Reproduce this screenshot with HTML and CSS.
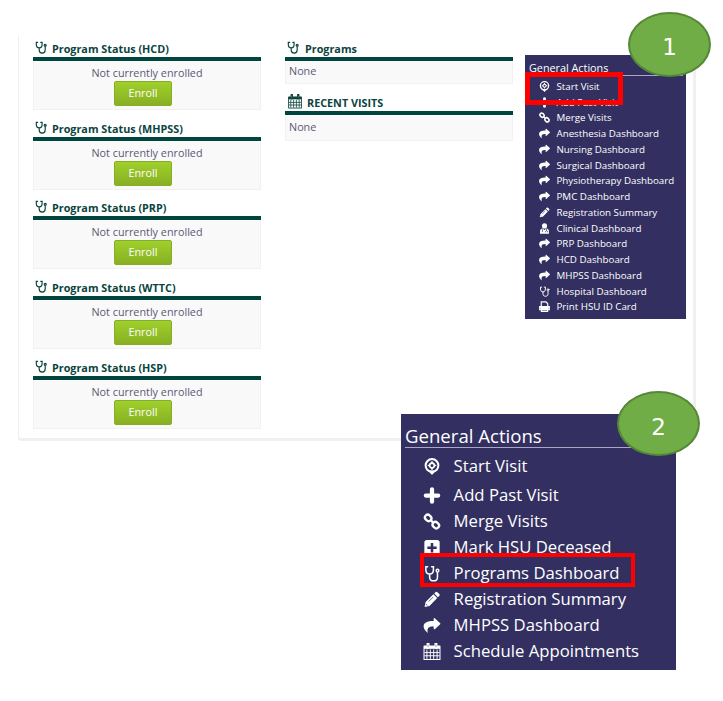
FILE: index.html
```
<!DOCTYPE html>
<html lang="en">
<head>
<meta charset="utf-8">
<title>Patient Dashboard</title>
<link rel="stylesheet" href="styles.css">
</head>
<body>
<svg class="defs" aria-hidden="true">
  <symbol id="steth" viewBox="0 0 16 18"><g fill="none" stroke="currentColor" stroke-width="1.6" stroke-linecap="round"><path d="M3.4 1.8H1.5V5C1.5 8 3 9.6 5.5 9.6S9.5 8 9.5 5V1.8H7.6M5.5 10V12.6C5.5 15.4 7.2 16.8 9.7 16.8S13.8 15.4 13.8 12.6V8"/><circle cx="13.8" cy="6" r="1.4"/></g></symbol>
  <symbol id="pin" viewBox="0 0 16 16"><path d="M4.2 11.8 8 16l3.8-4.2z" fill="currentColor"/><circle cx="8" cy="7" r="6" fill="none" stroke="currentColor" stroke-width="1.9"/><circle cx="8" cy="7" r="2.2" fill="none" stroke="currentColor" stroke-width="1.5"/><path d="M8 3v2M8 9v2M4 7h2M10 7h2" stroke="currentColor" stroke-width="1.5"/></symbol>
  <symbol id="plus" viewBox="0 0 16 16"><path d="M8 2.2v11.6M2.2 8h11.6" stroke="currentColor" stroke-width="4" stroke-linecap="round"/></symbol>
  <symbol id="link" viewBox="0 0 16 16"><g fill="none" stroke="currentColor" stroke-width="2.2"><rect x="-3.2" y="-2.6" width="6.4" height="5.2" rx="2.6" transform="translate(4.4 4.6) rotate(45)"/><rect x="-3.2" y="-2.6" width="6.4" height="5.2" rx="2.6" transform="translate(11.6 11.4) rotate(45)"/><path d="M6.2 6.2l3.6 3.6"/></g></symbol>
  <symbol id="share" viewBox="0 0 16 16"><path d="M9.6 1.2q.7-.4 1.3.1l4.8 4.5q.5.5 0 1l-4.8 4.5q-.6.6-1.3.1V8.9C5.2 8.7 3.2 9.8 3.9 14.2q.1 1-.5.3C1.2 12.4 0 10.4.1 8.4.4 5 4 3.6 9.6 3.7z" fill="currentColor"/></symbol>
  <symbol id="pencil" viewBox="0 0 16 16"><path d="M1 15l1-4.6L9.3 3.1l3.6 3.6L5.6 14zM10.1 2.3 11.5.9q.8-.6 1.6.2l1.8 1.8q.8.8.1 1.6l-1.4 1.4z" fill="currentColor"/><path d="M2.3 12.3l1.4 1.4M5 9.8l4-4" stroke="#333061" stroke-width=".7"/></symbol>
  <symbol id="calendar" viewBox="0 0 16 16"><path d="M.5 3h15v12.5H.5z" fill="none" stroke="currentColor" stroke-width="1"/><path d="M.5 2.5h15v3H.5z" fill="currentColor"/><path d="M3.2 6v9M6.4 6v9M9.6 6v9M12.8 6v9M1 9h14M1 12h14" stroke="currentColor" stroke-width=".9"/><path d="M4.3.5v3.8M11.7.5v3.8" stroke="currentColor" stroke-width="2.8" stroke-linecap="round"/><path d="M4.3 1.4v2.4M11.7 1.4v2.4" stroke="#888" stroke-width=".8"/></symbol>
  <symbol id="doctor" viewBox="0 0 16 16"><circle cx="8" cy="4.2" r="3.7" fill="currentColor"/><path d="M1.5 15.5v-3q0-4 3.7-4.4L8 10l2.8-1.9q3.7.4 3.7 4.4v3z" fill="currentColor"/><path d="M5 9v4M11 8.7v2.6M9.4 13.5v-1.2q1.6-2.2 3.2 0v1.2" stroke="#333061" fill="none"/></symbol>
  <symbol id="print" viewBox="0 0 16 16"><path d="M3.3 8V1.3h7L12.7 4v4M1 12.5V8.2h14v4.3zM3.5 11v4h9v-4z" fill="none" stroke="currentColor" stroke-width="1.7"/><path d="M1 8h14v2.7H1z" fill="currentColor"/></symbol>
  <symbol id="square" viewBox="0 0 16 16"><rect x=".8" y="1" width="14.4" height="14.4" rx="2.4" fill="currentColor"/><path d="M8 3.8v8.8M3.6 8.2h8.8" stroke="#333061" stroke-width="2.4"/></symbol>
</svg>

<main class="page">
  <div class="column">
    <section class="card"><h2><svg><use href="#steth"/></svg>Program Status (HCD)</h2><div class="box enroll"><p>Not currently enrolled</p><button>Enroll</button></div></section>
    <section class="card"><h2><svg><use href="#steth"/></svg>Program Status (MHPSS)</h2><div class="box enroll"><p>Not currently enrolled</p><button>Enroll</button></div></section>
    <section class="card"><h2><svg><use href="#steth"/></svg>Program Status (PRP)</h2><div class="box enroll"><p>Not currently enrolled</p><button>Enroll</button></div></section>
    <section class="card"><h2><svg><use href="#steth"/></svg>Program Status (WTTC)</h2><div class="box enroll"><p>Not currently enrolled</p><button>Enroll</button></div></section>
    <section class="card"><h2><svg><use href="#steth"/></svg>Program Status (HSP)</h2><div class="box enroll"><p>Not currently enrolled</p><button>Enroll</button></div></section>
  </div>
  <div class="column middle">
    <section class="card programs"><h2><svg><use href="#steth"/></svg>Programs</h2><div class="box">None</div></section>
    <section class="card visits"><h2><svg class="wide"><use href="#calendar"/></svg>RECENT VISITS</h2><div class="box">None</div></section>
  </div>
  <nav class="actions small">
    <h3>General Actions</h3>
    <ul>
      <li><svg><use href="#pin"/></svg>Start Visit</li>
      <li><svg><use href="#plus"/></svg>Add Past Visit</li>
      <li><svg><use href="#link"/></svg>Merge Visits</li>
      <li><svg><use href="#share"/></svg>Anesthesia Dashboard</li>
      <li><svg><use href="#share"/></svg>Nursing Dashboard</li>
      <li><svg><use href="#share"/></svg>Surgical Dashboard</li>
      <li><svg><use href="#share"/></svg>Physiotherapy Dashboard</li>
      <li><svg><use href="#share"/></svg>PMC Dashboard</li>
      <li><svg><use href="#pencil"/></svg>Registration Summary</li>
      <li><svg><use href="#doctor"/></svg>Clinical Dashboard</li>
      <li><svg><use href="#share"/></svg>PRP Dashboard</li>
      <li><svg><use href="#share"/></svg>HCD Dashboard</li>
      <li><svg><use href="#share"/></svg>MHPSS Dashboard</li>
      <li><svg><use href="#steth"/></svg>Hospital Dashboard</li>
      <li><svg><use href="#print"/></svg>Print HSU ID Card</li>
    </ul>
    <span class="marker"></span>
    <span class="step">1</span>
  </nav>
</main>

<nav class="actions large">
  <h3>General Actions</h3>
  <ul>
    <li><svg><use href="#pin"/></svg>Start Visit</li>
    <li><svg><use href="#plus"/></svg>Add Past Visit</li>
    <li><svg><use href="#link"/></svg>Merge Visits</li>
    <li><svg><use href="#square"/></svg>Mark HSU Deceased</li>
    <li><svg><use href="#steth"/></svg>Programs Dashboard</li>
    <li><svg><use href="#pencil"/></svg>Registration Summary</li>
    <li><svg><use href="#share"/></svg>MHPSS Dashboard</li>
    <li><svg><use href="#calendar"/></svg>Schedule Appointments</li>
  </ul>
  <span class="marker"></span>
  <span class="step">2</span>
</nav>
</body>
</html>
```
FILE: styles.css
```
* { box-sizing: border-box; }
body { margin: 0; height: 701px; overflow: hidden; position: relative; background: #fff; font-family: "Open Sans", sans-serif; }
h2, h3, p, ul { margin: 0; padding: 0; }
.defs { position: absolute; width: 0; height: 0; }

.page { display: flex; align-items: flex-start; width: 678px; height: 406px; margin: 35px 0 0 18px; padding: 5px 0 0 14px; border: solid #f0f0f0; border-width: 0 3px 3px 1px; border-radius: 0 0 4px 4px; }
.column { width: 228px; margin-right: 24px; }
.card { height: 79.7px; }
.card h2 { display: flex; align-items: center; height: 21px; padding: 1px 0 0 3px; border-bottom: 4px solid #00463f; color: #0b443f; font-size: 10.8px; line-height: 16px; font-weight: 700; white-space: nowrap; }
.card h2 svg { width: 12px; height: 13px; margin: -3px 5px 0 -1px; }
.programs h2 svg { margin-right: 6px; }
.card h2 svg.wide { width: 14px; height: 15px; margin-left: 0; }
.box { height: 22px; margin-top: 1px; padding: 0 4px; border: 1px solid #f1f1f1; border-top: 0; background: #f9f9f9; color: #5b5775; font-size: 10.8px; line-height: 17px; }
.enroll { display: flex; flex-direction: column; align-items: center; height: 48px; padding-top: 2px; }
.enroll button { width: 58px; height: 25px; margin-right: 8px; padding: 0; border: 1px solid #86ad24; border-radius: 2px; background: linear-gradient(#9fd02c, #88af23); color: #fff; font: 10.8px/21px "Open Sans", sans-serif; padding-bottom: 2px; }
.programs { height: 54px; }
.programs .box { padding-left: 3px; }
.visits .box { height: 25px; padding: 2px 3px 0; }

.actions { position: relative; background: #333061; color: #fff; }
.actions h3 { font-weight: 400; white-space: nowrap; }
.actions ul { list-style: none; }
.actions li { display: flex; align-items: center; white-space: nowrap; }
.small { width: 161px; height: 264px; margin: 15px 0 0 -12px; padding: 4px 3px; }
.small h3 { height: 17px; padding-left: 1px; border-bottom: 1px solid #aaa6c5; font-size: 10.8px; line-height: 17px; }
.small ul { padding-top: 2.6px; }
.small li { height: 15.75px; padding-left: 11px; font-size: 9.75px; }
.small li svg { width: 11px; height: 11px; margin-right: 6.5px; }
.large { position: absolute; left: 401px; top: 414px; width: 275px; height: 256px; padding: 9px 4px; }
.large h3 { height: 25px; border-bottom: 1px solid #aaa6c5; font-size: 18.6px; line-height: 26px; }
.large ul { padding-top: 4px; }
.large li { height: 26px; padding-left: 18px; font-size: 16.7px; }
.large li:first-child { margin-bottom: 3px; }
.large li svg { width: 18px; height: 17px; margin: 2px 12.6px 0 0; }

.marker { position: absolute; border: 4px solid #f00; }
.small .marker { left: 0; top: 17px; width: 98px; height: 33px; border-width: 5px; }
.large .marker { left: 19px; top: 139px; width: 215px; height: 34px; }
.step { position: absolute; display: flex; align-items: center; justify-content: center; width: 83px; height: 65px; border: 2px solid #568637; border-radius: 50%; background: #70ad47; color: #fff; font-family: "DejaVu Sans", sans-serif; font-size: 23px; font-weight: 400; }
.small .step { left: 103px; top: -43px; padding-top: 4px; }
.large .step { left: 216px; top: -23px; padding-top: 6px; }
```
